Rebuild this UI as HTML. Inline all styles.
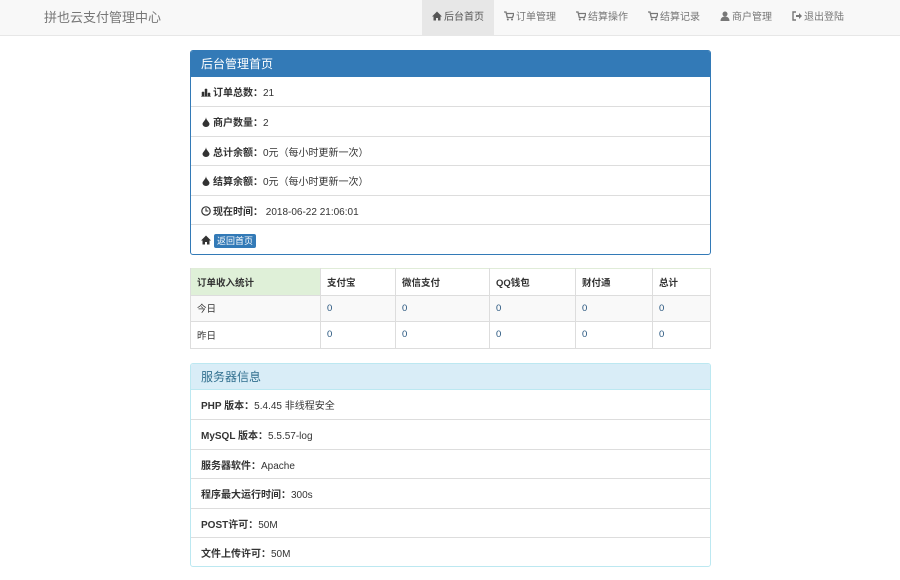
<!DOCTYPE html>
<html><head><meta charset="utf-8"><style>
*{box-sizing:border-box;margin:0;padding:0}
body{width:900px;height:580px;background:#fff;font-family:"Liberation Sans","Noto Sans CJK SC",sans-serif;font-size:10px;color:#333;position:relative;overflow:hidden}
.nav{position:absolute;left:0;top:0;width:900px;height:36px;background:#f8f8f8;border-bottom:1px solid #e7e7e7}
.brand{position:absolute;left:44px;top:9px;font-size:13px;line-height:18px;color:#777}
.menu{position:absolute;left:422px;top:0;height:35px;display:flex}
.menu div{height:35px;line-height:36px;padding:0 10px;color:#777;font-size:10px;white-space:nowrap}
.menu div.act{background:#e7e7e7;color:#555}
.menu svg,.row svg{vertical-align:-1px;margin-right:2px}
.panel{position:absolute;left:190px;width:521px;border:1px solid #337ab7;border-radius:3px;background:#fff;overflow:hidden}
.ph{height:26px;line-height:26px;padding-left:10px;font-size:12px;background:#337ab7;color:#fff}
.row{height:29.4px;line-height:29px;padding-top:2px;border-top:1px solid #ddd;padding-left:10px;white-space:nowrap}
b{font-weight:bold}
table{position:absolute;left:190px;top:268px;width:521px;border-collapse:collapse;border:1px solid #e0ecd8}
td{height:26.5px;border:1px solid #ddd;padding-left:6px;font-size:9.5px;color:#333}
tr:first-child td{font-weight:bold;border-top:none}
tr:nth-child(2) td{background:#f9f9f9}
.num{color:#23527c}
.info{border-color:#bce8f1}
.info .ph{background:#d9edf7;color:#31708f;border-bottom:1px solid #bce8f1}
.btn{background:#337ab7;color:#fff;font-size:9px;padding:2px 3px;border-radius:2px;margin-left:1px}
</style></head><body>
<svg width="0" height="0" style="position:absolute"><defs>
<symbol id="home" viewBox="0 0 10 10"><path d="M5 0.5L0 5.5h1.5V9.5h2.5V7h2v2.5h2.5V5.5H10z" fill="currentColor"/></symbol>
<symbol id="cart" viewBox="0 0 10 10"><path d="M0 1h2l1.3 5.5h5.2L10 2.5H3" fill="none" stroke="currentColor" stroke-width="1.3"/><circle cx="3.8" cy="8.5" r="1" fill="currentColor"/><circle cx="8" cy="8.5" r="1" fill="currentColor"/></symbol>
<symbol id="user" viewBox="0 0 10 10"><circle cx="5" cy="3" r="2.5" fill="currentColor"/><path d="M0.5 10c0-3 2-4.5 4.5-4.5S9.5 7 9.5 10z" fill="currentColor"/></symbol>
<symbol id="out" viewBox="0 0 10 10"><path d="M4 1H1v8h3" fill="none" stroke="currentColor" stroke-width="1.4"/><path d="M4 4h3V2l3 3-3 3V6H4z" fill="currentColor"/></symbol>
<symbol id="bar" viewBox="0 0 10 10"><path d="M0 9.5h10M1 5h2v4H1zM4 2h2v7H4zM7 6h2v3H7z" fill="currentColor" stroke="currentColor" stroke-width=".5"/></symbol>
<symbol id="drop" viewBox="0 0 10 10"><path d="M5 0C5 3 1.5 5 1.5 7a3.5 3 0 0 0 7 0C8.5 5 5 3 5 0z" fill="currentColor"/></symbol>
<symbol id="clock" viewBox="0 0 10 10"><circle cx="5" cy="5" r="4.2" fill="none" stroke="currentColor" stroke-width="1.2"/><path d="M5 2.2V5h2.3" fill="none" stroke="currentColor" stroke-width="1.1"/></symbol>
</defs></svg>
<div class="nav"><div class="brand">拼也云支付管理中心</div>
<div class="menu">
<div class="act"><svg width="10" height="10"><use href="#home"/></svg>后台首页</div>
<div><svg width="10" height="10"><use href="#cart"/></svg>订单管理</div>
<div><svg width="10" height="10"><use href="#cart"/></svg>结算操作</div>
<div><svg width="10" height="10"><use href="#cart"/></svg>结算记录</div>
<div><svg width="10" height="10"><use href="#user"/></svg>商户管理</div>
<div><svg width="10" height="10"><use href="#out"/></svg>退出登陆</div>
</div></div>

<div class="panel" style="top:50px;height:205px">
<div class="ph">后台管理首页</div>
<div class="row" style="border-top:none"><svg width="10" height="10"><use href="#bar"/></svg><b>订单总数：</b>21</div>
<div class="row"><svg width="10" height="10"><use href="#drop"/></svg><b>商户数量：</b>2</div>
<div class="row"><svg width="10" height="10"><use href="#drop"/></svg><b>总计余额：</b>0元（每小时更新一次）</div>
<div class="row"><svg width="10" height="10"><use href="#drop"/></svg><b>结算余额：</b>0元（每小时更新一次）</div>
<div class="row"><svg width="10" height="10"><use href="#clock"/></svg><b>现在时间：</b>&nbsp;2018-06-22 21:06:01</div>
<div class="row"><svg width="10" height="10"><use href="#home"/></svg><span class="btn">返回首页</span></div>
</div>

<table>
<tr><td style="width:130px;background:#dff0d8">订单收入统计</td><td style="width:75px">支付宝</td><td style="width:94px">微信支付</td><td style="width:86px">QQ钱包</td><td style="width:77px">财付通</td><td>总计</td></tr>
<tr><td>今日</td><td class="num">0</td><td class="num">0</td><td class="num">0</td><td class="num">0</td><td class="num">0</td></tr>
<tr><td>昨日</td><td class="num">0</td><td class="num">0</td><td class="num">0</td><td class="num">0</td><td class="num">0</td></tr>
</table>

<div class="panel info" style="top:363px;height:204px">
<div class="ph">服务器信息</div>
<div class="row" style="border-top:none"><b>PHP 版本：</b>5.4.45 非线程安全</div>
<div class="row"><b>MySQL 版本：</b>5.5.57-log</div>
<div class="row"><b>服务器软件：</b>Apache</div>
<div class="row"><b>程序最大运行时间：</b>300s</div>
<div class="row"><b>POST许可：</b>50M</div>
<div class="row"><b>文件上传许可：</b>50M</div>
</div>
</body></html>
